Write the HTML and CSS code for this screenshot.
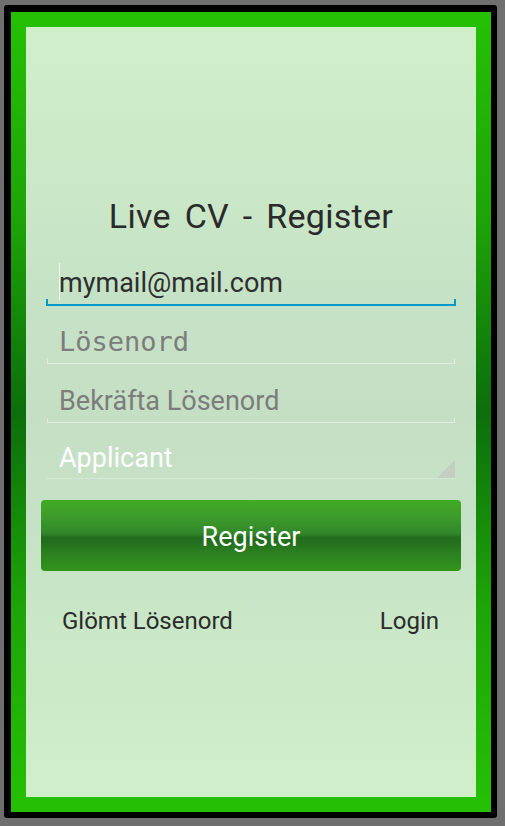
FILE: index.html
```html
<!DOCTYPE html>
<html>
<head>
<meta charset="utf-8">
<link rel="stylesheet" href="styles.css">
</head>
<body>
<div class="device">
  <div class="frame">
    <div class="panel">
      <h1 class="title">Live CV - Register</h1>
      <div class="field focused">
        <span class="cursor"></span>
        <span class="value">mymail@mail.com</span>
      </div>
      <div class="field">
        <span class="hint mono">Lösenord</span>
      </div>
      <div class="field">
        <span class="hint">Bekräfta Lösenord</span>
      </div>
      <div class="spinner">
        <span class="spinner-value">Applicant</span>
        <span class="spinner-arrow"></span>
      </div>
      <button class="btn">Register</button>
      <div class="links">
        <span class="link">Glömt Lösenord</span>
        <span class="link">Login</span>
      </div>
    </div>
  </div>
</div>
</body>
</html>
```

FILE: styles.css
```css
html, body {
  margin: 0;
  padding: 0;
}
body {
  background: #6f6f6f;
  width: 505px;
  height: 826px;
  overflow: hidden;
  font-family: Roboto, "Noto Sans", sans-serif;
}
.device {
  margin: 5px 8px 0 4px;
  width: 493px;
  height: 813px;
  box-sizing: border-box;
  background: #000;
  border-radius: 3px;
  padding: 7px 6px 6px 7px;
}
.frame {
  height: 800px;
  box-sizing: border-box;
  padding: 15px;
  background: linear-gradient(to bottom, #25c004 0%, #1ea508 25%, #0c6e0c 50%, #1ea508 75%, #25c004 100%);
}
.panel {
  height: 770px;
  box-sizing: border-box;
  padding: 169px 15px 0;
  background: linear-gradient(to bottom, #d0efc9 0%, #c6e2c6 35%, #c5dfc4 50%, #c6e2c6 65%, #d0efc9 100%);
  display: flex;
  flex-direction: column;
}
.title {
  margin: 0;
  height: 40px;
  line-height: 40px;
  font-size: 34px;
  font-weight: 400;
  letter-spacing: 0.3px;
  word-spacing: 5px;
  text-align: center;
  color: #2a2a2a;
}
.field {
  position: relative;
  height: 59px;
  margin: 0 5px;
  box-sizing: border-box;
  padding: 19px 13px 0;
  font-size: 27px;
  line-height: 32px;
}
.title + .field {
  margin-top: 12px;
}
.field::before {
  content: "";
  position: absolute;
  left: 1px;
  right: 1px;
  bottom: 2px;
  height: 4px;
  border: 1px solid rgba(255, 255, 255, 0.45);
  border-top: none;
}
.field.focused::before {
  left: 0;
  right: 0;
  bottom: 1px;
  height: 5px;
  border: 2px solid #0099cc;
  border-top: none;
}
.cursor {
  position: absolute;
  left: 13px;
  top: 15px;
  width: 1px;
  height: 37px;
  background: rgba(255, 255, 255, 0.85);
}
.value {
  color: #2e2e2e;
}
.hint {
  color: #7c7c7c;
}
.mono {
  font-family: "DejaVu Sans Mono", "Liberation Mono", monospace;
}
.spinner {
  position: relative;
  height: 54px;
  margin: 0 5px;
  box-sizing: border-box;
  padding: 17px 13px 0;
  font-size: 27px;
  line-height: 32px;
  border-bottom: 1px solid rgba(255, 255, 255, 0.25);
}
.spinner-value {
  color: #ffffff;
}
.spinner-arrow {
  position: absolute;
  right: 1px;
  bottom: 0;
  width: 0;
  height: 0;
  border-left: 18px solid transparent;
  border-bottom: 18px solid rgba(190, 190, 190, 0.5);
}
.btn {
  margin-top: 21px;
  height: 71px;
  border: none;
  border-radius: 4px;
  font-family: Roboto, "Noto Sans", sans-serif;
  font-size: 27px;
  color: #ffffff;
  padding: 3px 0 0;
  background: linear-gradient(to bottom, #42aa24 0%, #3d9a2c 25%, #33892a 45%, #2b7c25 50%, #226e1c 52%, #236f1c 60%, #2a7e20 72%, #33941c 100%);
}
.links {
  margin-top: 35px;
  display: flex;
  justify-content: space-between;
  padding: 0 22px 0 21px;
  font-size: 24px;
  line-height: 30px;
  color: #2b2b2b;
}
```
